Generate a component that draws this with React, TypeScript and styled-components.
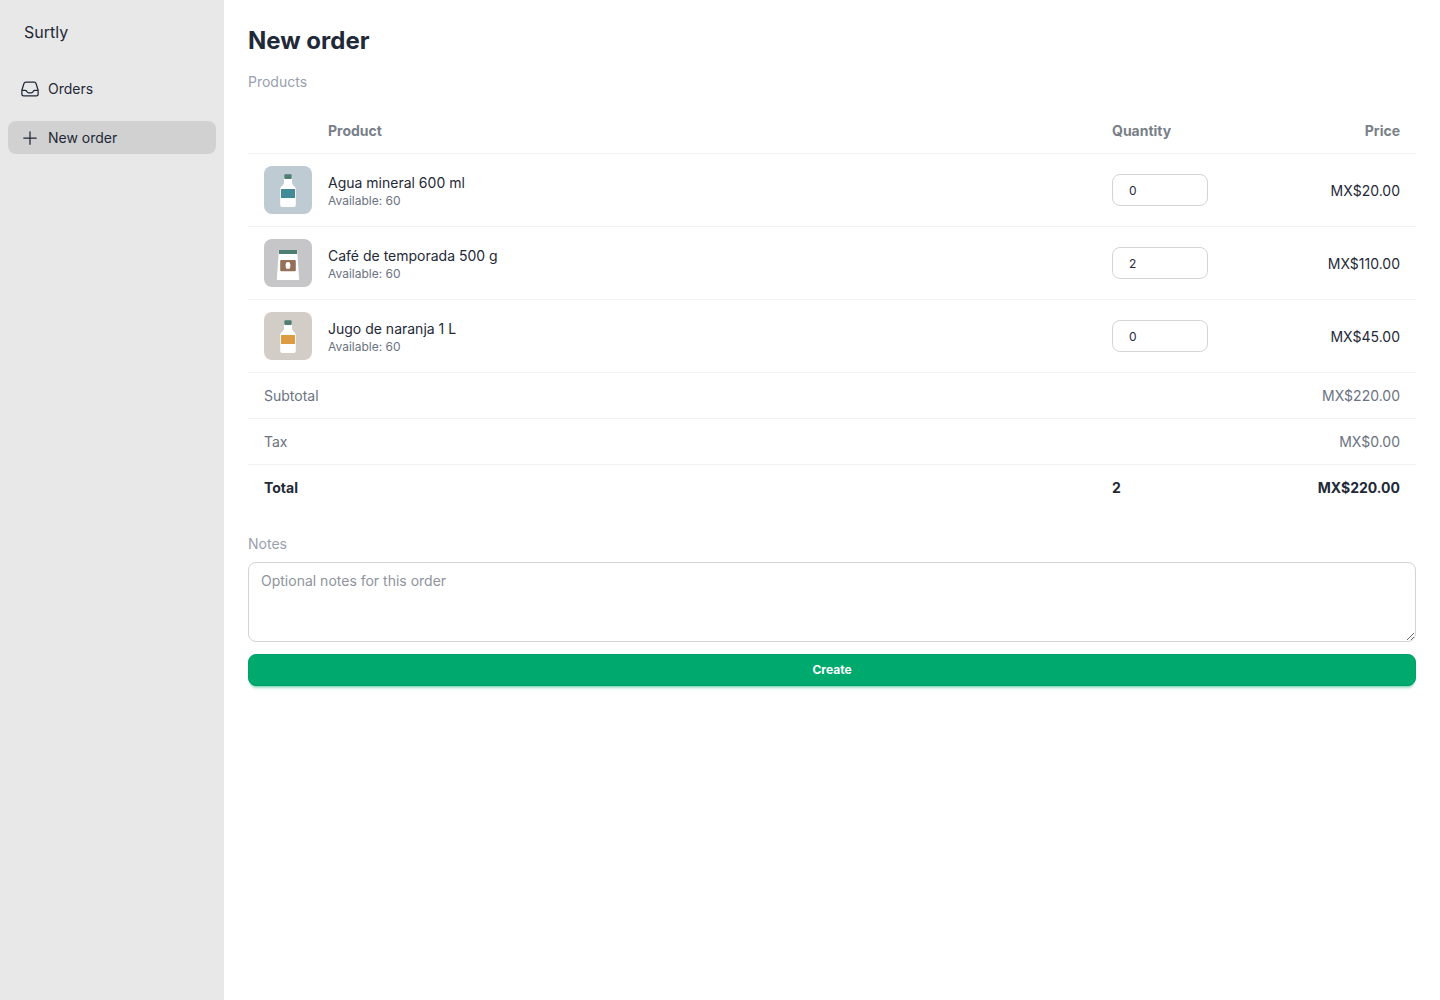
import React, { useState } from "react";
import styled, { createGlobalStyle } from "styled-components";

const GlobalStyle = createGlobalStyle`
  *, *::before, *::after { box-sizing: border-box; }
  body {
    margin: 0;
    background: #ffffff;
    color: #1f2937;
    font-family: Inter, "Liberation Sans", sans-serif;
    font-size: 14px;
    line-height: 21px;
  }
`;

const Layout = styled.div`
  display: flex;
  align-items: stretch;
  min-height: 100vh;
`;

const Sidebar = styled.aside`
  flex: 0 0 224px;
  display: flex;
  flex-direction: column;
  gap: 24px;
  padding: 16px 8px;
  background: #e8e8e8;
`;

const Brand = styled.div`
  padding: 4px 16px;
  font-size: 16px;
  line-height: 24px;
`;

const Menu = styled.nav`
  display: flex;
  flex-direction: column;
  gap: 16px;
`;

const MenuLink = styled.a<{ $active?: boolean }>`
  display: flex;
  align-items: center;
  gap: 8px;
  padding: 6px 12px;
  border-radius: 8px;
  background: ${(p) => (p.$active ? "#d1d1d1" : "transparent")};
  color: inherit;
  text-decoration: none;

  svg {
    width: 20px;
    height: 20px;
  }
`;

const Main = styled.main`
  flex: 1;
  min-width: 0;
  padding: 24px;
`;

const Title = styled.h1`
  margin: 0 0 14px;
  font-size: 24px;
  font-weight: 700;
  line-height: 34px;
`;

const sectionLabel = `
  display: block;
  color: #989fae;
  font-size: 14px;
  font-weight: 400;
  line-height: 20px;
`;

const SectionTitle = styled.h2`
  ${sectionLabel}
  margin: 0 0 16px;
`;

const NotesLabel = styled.label`
  ${sectionLabel}
  margin: 24px 0 8px;
`;

const Table = styled.table`
  width: 100%;
  border-collapse: separate;
  border-spacing: 0;
  table-layout: fixed;

  tr > * {
    border-bottom: 1px solid #f2f2f2;
  }
  tfoot tr:last-child > * {
    border-bottom: 0;
  }
`;

const ImageCol = styled.col`
  width: 64px;
`;
const QuantityCol = styled.col`
  width: 128px;
`;
const PriceCol = styled.col`
  width: 192px;
`;

const HeadCell = styled.th<{ $end?: boolean }>`
  padding: 12px 16px;
  color: #797f88;
  font-weight: 700;
  text-align: ${(p) => (p.$end ? "right" : "left")};
`;

const ImageHead = styled.td`
  padding: 0;
`;

const Cell = styled.td<{ $end?: boolean }>`
  padding: 12px 16px;
  vertical-align: middle;
  text-align: ${(p) => (p.$end ? "right" : "left")};
`;

const ImageCell = styled(Cell)`
  padding-right: 0;
`;

const SummaryRow = styled.tr<{ $strong?: boolean }>`
  color: ${(p) => (p.$strong ? "#1f2937" : "#6b7280")};
  font-weight: ${(p) => (p.$strong ? 700 : 400)};
`;

const SummaryHead = styled.th`
  padding: 12px 16px;
  font-weight: inherit;
  text-align: left;
`;

const Thumb = styled.svg`
  display: block;
  width: 48px;
  height: 48px;
  border-radius: 8px;
`;

const ProductName = styled.label`
  display: block;
  line-height: 21px;
`;

const Stock = styled.div`
  color: #6b7280;
  font-size: 12px;
  line-height: 16px;
`;

const QuantityInput = styled.input`
  display: block;
  width: 100%;
  height: 32px;
  padding: 0 16px;
  border: 1px solid #d2d4d7;
  border-radius: 8px;
  background: #ffffff;
  color: inherit;
  font: inherit;
  font-size: 12px;
`;

const NotesInput = styled.textarea`
  display: block;
  width: 100%;
  height: 80px;
  padding: 8px 12px;
  border: 1px solid #d2d4d7;
  border-radius: 8px;
  background: #ffffff;
  color: inherit;
  font: inherit;
  line-height: 20px;
  resize: vertical;

  &::placeholder {
    color: #8f949b;
    opacity: 1;
  }
`;

const CreateButton = styled.button`
  display: block;
  width: 100%;
  height: 32px;
  margin-top: 12px;
  padding: 0 12px;
  border: 1px solid #00a068;
  border-radius: 8px;
  background: #00a96e;
  box-shadow: 0 3px 2px -2px rgba(0, 169, 110, 0.3), 0 4px 3px -2px rgba(0, 169, 110, 0.3);
  color: #ffffff;
  font: inherit;
  font-size: 12px;
  font-weight: 700;
  line-height: 16px;
  cursor: pointer;
`;

const stroke = {
  viewBox: "0 0 24 24",
  fill: "none",
  stroke: "currentColor",
  strokeWidth: 1.5,
  strokeLinecap: "round" as const,
  strokeLinejoin: "round" as const,
  "aria-hidden": true,
};

const InboxIcon = () => (
  <svg {...stroke}>
    <path d="M2.25 13.5h3.86a2.25 2.25 0 0 1 2.012 1.244l.256.512a2.25 2.25 0 0 0 2.013 1.244h3.218a2.25 2.25 0 0 0 2.013-1.244l.256-.512a2.25 2.25 0 0 1 2.013-1.244h3.859m-19.5.338V18a2.25 2.25 0 0 0 2.25 2.25h15A2.25 2.25 0 0 0 21.75 18v-4.162c0-.224-.034-.447-.1-.661L19.24 5.338a2.25 2.25 0 0 0-2.15-1.588H6.911a2.25 2.25 0 0 0-2.15 1.588L2.35 13.177a2.25 2.25 0 0 0-.1.661Z" />
  </svg>
);

const PlusIcon = () => (
  <svg {...stroke}>
    <path d="M12 4.5v15m7.5-7.5h-15" />
  </svg>
);

const Bottle = ({ background, label }: { background: string; label: string }) => (
  <Thumb viewBox="0 0 48 48" aria-hidden="true">
    <rect width="48" height="48" fill={background} />
    <path
      d="M20 12.5h8V17c0 2 3.8 3 3.8 6.5V39a2 2 0 0 1-2 2H18.2a2 2 0 0 1-2-2V23.5C16.2 20 20 19 20 17Z"
      fill="#ffffff"
    />
    <rect x="20.4" y="8.2" width="7.2" height="4.8" rx="1" fill="#4e7d72" />
    <rect x="17" y="23" width="14" height="9" fill={label} />
  </Thumb>
);

const CoffeeBag = () => (
  <Thumb viewBox="0 0 48 48" aria-hidden="true">
    <rect width="48" height="48" fill="#c6c6c8" />
    <path d="M14.8 12h18.4L35.2 41H12.8Z" fill="#ffffff" />
    <rect x="15" y="11" width="18" height="4" rx="0.5" fill="#4e7d72" />
    <rect x="16.2" y="21" width="15.6" height="11.2" rx="1" fill="#96705a" />
    <rect x="21.7" y="23" width="4.6" height="7" rx="2.2" fill="#ffffff" />
  </Thumb>
);

const products = [
  {
    id: "agua",
    name: "Agua mineral 600 ml",
    stock: 60,
    price: 20,
    initial: 0,
    image: <Bottle background="#bfcbd2" label="#418a96" />,
  },
  {
    id: "cafe",
    name: "Café de temporada 500 g",
    stock: 60,
    price: 110,
    initial: 2,
    image: <CoffeeBag />,
  },
  {
    id: "jugo",
    name: "Jugo de naranja 1 L",
    stock: 60,
    price: 45,
    initial: 0,
    image: <Bottle background="#d2cdc6" label="#dc9c42" />,
  },
];

const money = (value: number) => `MX$${value.toFixed(2)}`;

export default function App() {
  const [quantities, setQuantities] = useState(products.map((p) => p.initial));
  const count = quantities.reduce((sum, q) => sum + q, 0);
  const subtotal = products.reduce((sum, p, i) => sum + p.price * quantities[i], 0);

  const updateQuantity = (index: number, value: string) =>
    setQuantities(quantities.map((q, i) => (i === index ? Number(value) || 0 : q)));

  return (
    <Layout>
      <GlobalStyle />
      <Sidebar>
        <Brand>Surtly</Brand>
        <Menu>
          <MenuLink href="#orders">
            <InboxIcon />
            Orders
          </MenuLink>
          <MenuLink href="#new-order" $active aria-current="page">
            <PlusIcon />
            New order
          </MenuLink>
        </Menu>
      </Sidebar>
      <Main>
        <Title>New order</Title>
        <SectionTitle>Products</SectionTitle>
        <form onSubmit={(e) => e.preventDefault()}>
          <Table>
            <colgroup>
              <ImageCol />
              <col />
              <QuantityCol />
              <PriceCol />
            </colgroup>
            <thead>
              <tr>
                <ImageHead />
                <HeadCell scope="col">Product</HeadCell>
                <HeadCell scope="col">Quantity</HeadCell>
                <HeadCell scope="col" $end>
                  Price
                </HeadCell>
              </tr>
            </thead>
            <tbody>
              {products.map((product, i) => (
                <tr key={product.id}>
                  <ImageCell>{product.image}</ImageCell>
                  <Cell>
                    <ProductName htmlFor={product.id}>{product.name}</ProductName>
                    <Stock>Available: {product.stock}</Stock>
                  </Cell>
                  <Cell>
                    <QuantityInput
                      id={product.id}
                      type="number"
                      min={0}
                      max={product.stock}
                      value={quantities[i]}
                      onChange={(e) => updateQuantity(i, e.target.value)}
                    />
                  </Cell>
                  <Cell $end>{money(product.price)}</Cell>
                </tr>
              ))}
            </tbody>
            <tfoot>
              <SummaryRow>
                <SummaryHead scope="row" colSpan={3}>
                  Subtotal
                </SummaryHead>
                <Cell $end>{money(subtotal)}</Cell>
              </SummaryRow>
              <SummaryRow>
                <SummaryHead scope="row" colSpan={3}>
                  Tax
                </SummaryHead>
                <Cell $end>{money(0)}</Cell>
              </SummaryRow>
              <SummaryRow $strong>
                <SummaryHead scope="row" colSpan={2}>
                  Total
                </SummaryHead>
                <Cell>{count}</Cell>
                <Cell $end>{money(subtotal)}</Cell>
              </SummaryRow>
            </tfoot>
          </Table>
          <NotesLabel htmlFor="notes">Notes</NotesLabel>
          <NotesInput id="notes" placeholder="Optional notes for this order" />
          <CreateButton type="submit">Create</CreateButton>
        </form>
      </Main>
    </Layout>
  );
}
